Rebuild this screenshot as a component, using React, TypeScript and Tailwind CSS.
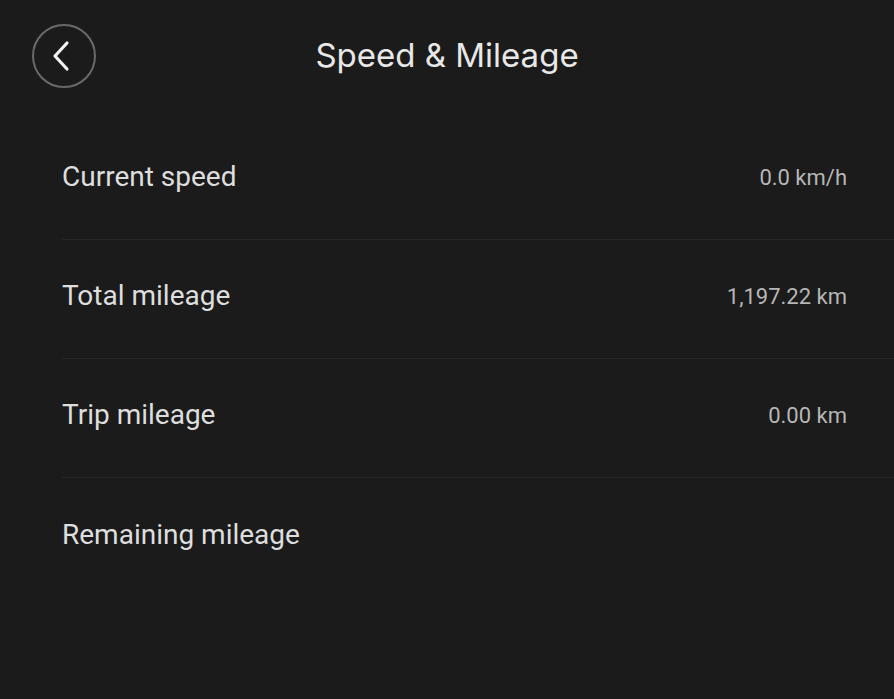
import React from "react";

const rows = [
  { label: "Current speed", value: "0.0 km/h" },
  { label: "Total mileage", value: "1,197.22 km" },
  { label: "Trip mileage", value: "0.00 km" },
  { label: "Remaining mileage", value: "" },
];

export default function App() {
  return (
    <div className="w-[894px] h-[699px] bg-[#1b1b1b] overflow-hidden">
      <header className="h-[112px] px-[32px] flex items-center relative">
        <button className="w-[64px] h-[64px] rounded-full border-2 border-[#6a6a6a] flex items-center justify-center">
          <svg width="22" height="34" viewBox="0 0 22 34" fill="none" className="-ml-[4px]">
            <path d="M16 4L4 17L16 30" stroke="#f2f2f2" strokeWidth="3.2" strokeLinecap="round" strokeLinejoin="round" />
          </svg>
        </button>
        <h1 className="absolute left-0 right-0 text-center text-[33px] text-[#e8e8e8] font-['Inter',sans-serif] pointer-events-none">
          Speed &amp; Mileage
        </h1>
      </header>

      <div className="pl-[62px] pt-[9px] font-['Roboto',sans-serif]">
        {rows.map((r, i) => (
          <div
            key={r.label}
            className={
              "h-[119px] pb-[6px] flex items-center justify-between pr-[47px] " +
              (i < rows.length - 1 ? "border-b border-[#262626]" : "")
            }
          >
            <span className="text-[28px] text-[#dedede]">{r.label}</span>
            <span className="text-[22px] text-[#b6b6b6]">{r.value}</span>
          </div>
        ))}
      </div>
    </div>
  );
}
